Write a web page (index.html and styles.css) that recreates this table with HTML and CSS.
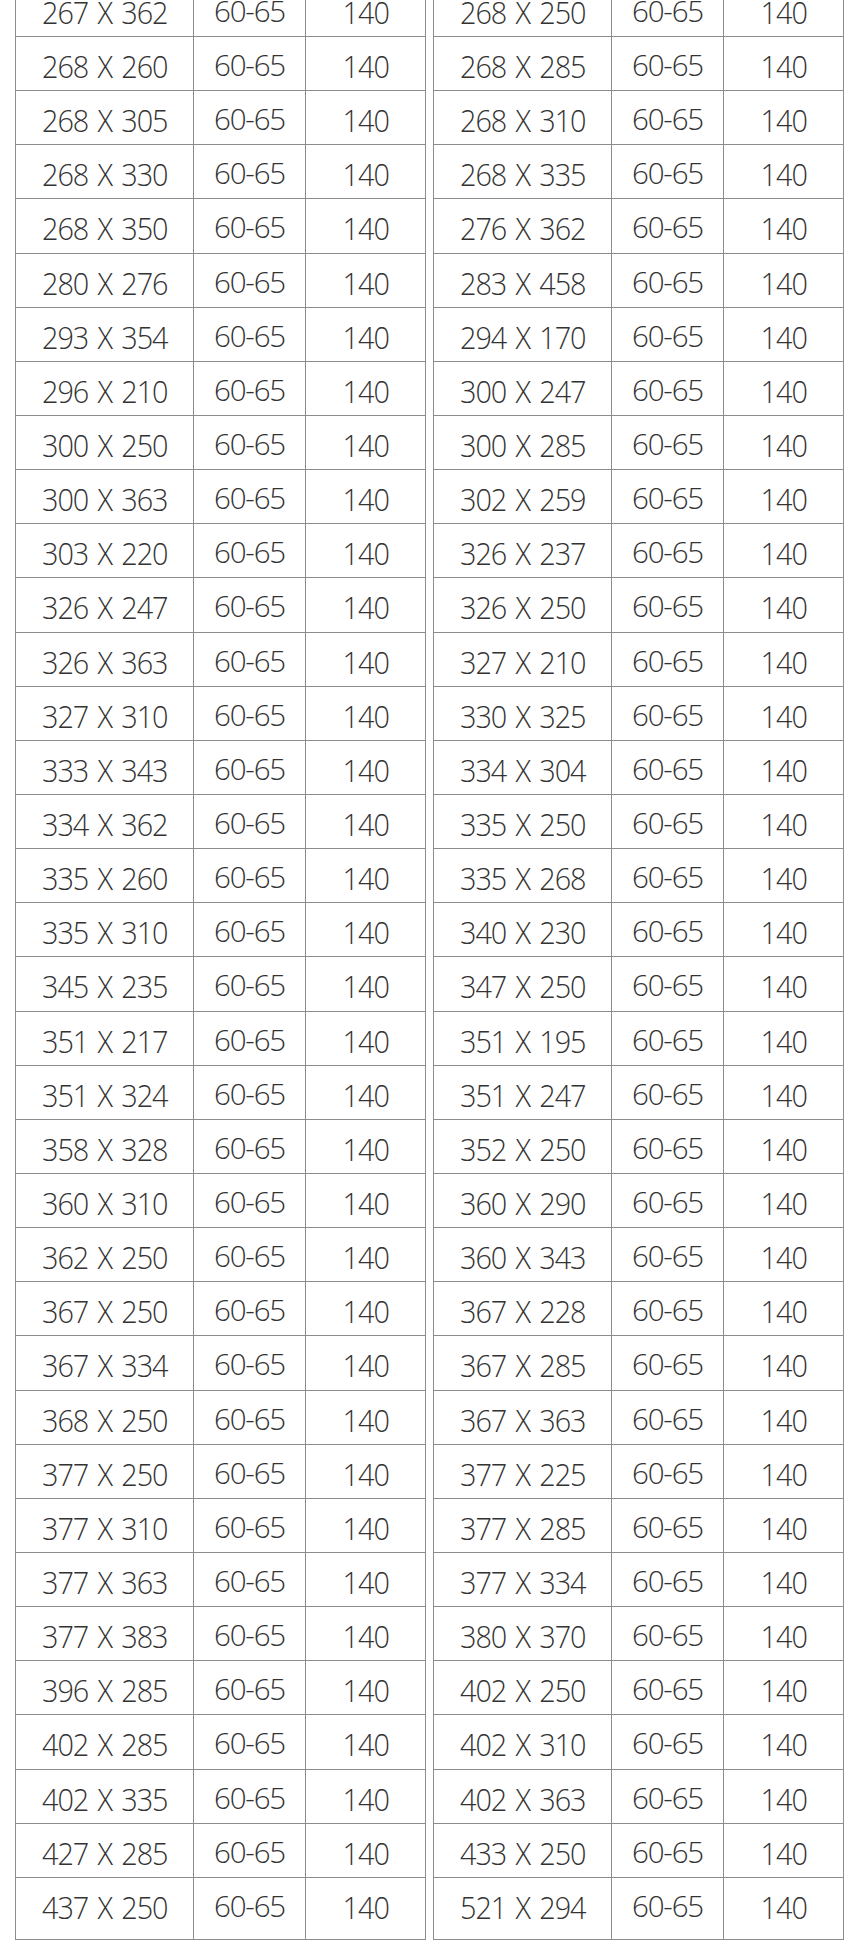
FILE: index.html
```html
<!DOCTYPE html>
<html lang="ko">
<head>
<meta charset="utf-8">
<title>Size table</title>
<link rel="stylesheet" href="styles.css">
</head>
<body>
<div class="wrap">
  <div class="sheet" id="left"></div>
  <div class="sheet" id="right"></div>
</div>
<script>
var left = ["267 X 362","268 X 260","268 X 305","268 X 330","268 X 350","280 X 276","293 X 354","296 X 210","300 X 250","300 X 363","303 X 220","326 X 247","326 X 363","327 X 310","333 X 343","334 X 362","335 X 260","335 X 310","345 X 235","351 X 217","351 X 324","358 X 328","360 X 310","362 X 250","367 X 250","367 X 334","368 X 250","377 X 250","377 X 310","377 X 363","377 X 383","396 X 285","402 X 285","402 X 335","427 X 285","437 X 250"];
var right = ["268 X 250","268 X 285","268 X 310","268 X 335","276 X 362","283 X 458","294 X 170","300 X 247","300 X 285","302 X 259","326 X 237","326 X 250","327 X 210","330 X 325","334 X 304","335 X 250","335 X 268","340 X 230","347 X 250","351 X 195","351 X 247","352 X 250","360 X 290","360 X 343","367 X 228","367 X 285","367 X 363","377 X 225","377 X 285","377 X 334","380 X 370","402 X 250","402 X 310","402 X 363","433 X 250","521 X 294"];
function fill(id, data) {
  var el = document.getElementById(id);
  var html = "";
  data.forEach(function (s) {
    html += '<div class="cell size"><span class="t">' + s + '</span></div>' +
            '<div class="cell range">60-65</div>' +
            '<div class="cell qty"><span class="t">140</span></div>';
  });
  el.innerHTML = html;
}
fill("left", left);
fill("right", right);
</script>
</body>
</html>
```

FILE: styles.css
```css
html, body {
  margin: 0;
  padding: 0;
  background: #ffffff;
}

body {
  width: 860px;
  height: 1950px;
  overflow: hidden;
}

.wrap {
  display: flex;
  gap: 7px;
  margin-top: -18.15px;
  padding-left: 15px;
}

.sheet {
  display: grid;
  grid-template-columns: 178px 112px 120px;
  grid-template-rows: repeat(35, 54.15px) 62px;
  border-top: 1px solid #8c8c8c;
  border-left: 1px solid #8c8c8c;
}

.cell {
  box-sizing: border-box;
  border-right: 1px solid #8c8c8c;
  border-bottom: 1px solid #8c8c8c;
  text-align: center;
  font-family: "Open Sans", "Noto Sans", sans-serif;
  color: #333333;
  white-space: nowrap;
}

.size,
.qty {
  font-size: 32px;
  font-weight: 330;
  line-height: 32px;
  letter-spacing: -1.1px;
  word-spacing: 3px;
  padding-top: 13px;
}

.t {
  display: inline-block;
  transform: scaleX(0.9);
  transform-origin: center;
}

.range {
  font-size: 29.5px;
  font-weight: 330;
  line-height: 32px;
  letter-spacing: -1.2px;
  padding-top: 12px;
}
```
